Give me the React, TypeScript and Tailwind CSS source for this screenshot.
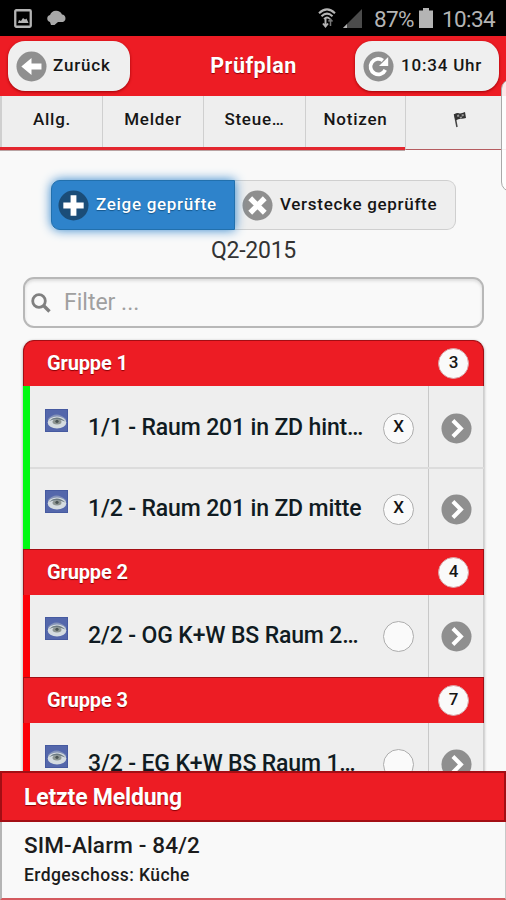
import type { ReactNode } from "react";

const EMBOSS = "[text-shadow:0_1px_0_#f3f3f3]";
const SHADE = "[text-shadow:0_1px_1px_#8a0006]";

function Disc({ color, children }: { color: string; children: ReactNode }) {
  return (
    <svg viewBox="0 0 32 32" className="block size-[31px] shrink-0">
      <circle cx="16" cy="16" r="15.5" fill={color} />
      {children}
    </svg>
  );
}

function ArrowLeft() {
  return (
    <Disc color="#8f8f8f">
      <path d="M5.5 16 16 7.3v5.500h10.300v6.400H16v5.500Z" fill="#fff" />
    </Disc>
  );
}

function Refresh() {
  return (
    <Disc color="#8f8f8f">
      <path d="M23 19.500A8 8 0 1 1 20.500 9.700" fill="none" stroke="#fff" strokeWidth="3.800" />
      <path d="M26 6.200V15.500H16.500Z" fill="#fff" />
    </Disc>
  );
}

function Plus() {
  return (
    <Disc color="#1b4d78">
      <path d="M13 5.500h6V13h7.500v6H19v7.500h-6V19H5.500v-6H13Z" fill="#fff" />
    </Disc>
  );
}

function Cross() {
  return (
    <Disc color="#8f8f8f">
      <path d="m8.500 8.500 15 15M23.500 8.500 8.500 23.500" stroke="#fff" strokeWidth="5.600" />
    </Disc>
  );
}

function Chevron() {
  return (
    <Disc color="#8f8f8f">
      <path d="m12.300 7.800 8.200 8.200-8.200 8.200" fill="none" stroke="#fff" strokeWidth="4.200" />
    </Disc>
  );
}

function Eye() {
  return (
    <svg viewBox="0 0 23 23" className="block size-[23px] shrink-0">
      <rect width="23" height="23" fill="#465aa0" />
      <rect x="1" y="1" width="21" height="21" fill="#5467ab" />
      <path d="M3 10Q11 1 21 10L20 14H4Z" fill="#8493b9" />
      <ellipse cx="12" cy="13.500" rx="9.300" ry="6" fill="#d5dce0" />
      <path d="M4 12Q12 5 20.500 12.500Q12 9 4 12Z" fill="#6d7b83" />
      <ellipse cx="12" cy="12.800" rx="4.500" ry="2.600" fill="#8d9591" />
      <circle cx="12" cy="12.300" r="1.600" fill="#4b5555" />
    </svg>
  );
}

function StatusBar() {
  return (
    <div className="flex h-9 shrink-0 items-center bg-black pl-[14px] pr-[11px] text-[#b4b4b4]">
      <svg viewBox="0 0 18 19" className="h-[19px] w-[18px]">
        <rect x="1.250" y="1.250" width="15.500" height="16.500" rx="1" fill="none" stroke="#b4b4b4" strokeWidth="2.300" />
        <path d="m4 14 1-3 2 1 2-3 2 1.500 1.500-1 2 4.500Z" fill="#b4b4b4" />
      </svg>
      <svg viewBox="0 0 19 16" className="ml-[15px] h-4 w-[19px]">
        <path d="M3 12A3.600 3.600 0 0 1 3 5 6.500 6.500 0 0 1 15 4.500 3.900 3.900 0 0 1 16 12H11L7.500 15H4Z" fill="#a8a8a8" />
      </svg>
      <svg viewBox="0 0 18 20" className="ml-[252px] h-5 w-[18px]" fill="none" stroke="#b4b4b4">
        <path d="M1 5.200Q9-2.500 17 5.200M3.500 8.200Q9 3 14.500 8.200" strokeWidth="2" />
        <path d="M6 11Q9 8 12 11" strokeWidth="1.700" />
        <path d="M7.500 10v8M5 15.500l2.500 3 2.500-3" strokeWidth="1.900" />
        <path d="M12.500 18v-6M10.500 13.500l2-2.300 2 2.300" stroke="#777" strokeWidth="1.500" />
      </svg>
      <svg viewBox="0 0 19 19" className="ml-[7px] h-[19px] w-[19px]">
        <path d="M0 19 19 0v19Z" fill="#4b4b4b" />
        <path d="m0 19 4-4v4Z" fill="#b4b4b4" />
      </svg>
      <span className="ml-[12px] w-[42px] whitespace-nowrap pt-[3px] text-[22.500px] tracking-[-0.700px]">87%</span>
      <svg viewBox="0 0 14 20" className="ml-[3px] h-5 w-[14px]">
        <path d="M0 2.500h4V0h6v2.500h4V20H0Z" fill="#b4b4b4" />
      </svg>
      <span className="ml-[9px] whitespace-nowrap pt-[3px] text-[22.500px] tracking-[-0.600px]">10:34</span>
    </div>
  );
}

function Header() {
  const button =
    "flex h-[50px] items-center rounded-[17px] bg-[#efefef] text-[17px] font-medium tracking-[0.800px] text-[#161616] shadow-[0_1px_3px_#9c0006] " + EMBOSS;
  return (
    <header className="flex h-[60px] shrink-0 items-center justify-between bg-[#ed1c24] pl-2 pr-[7px]">
      <button className={button + " w-[122px] pl-2"}>
        <ArrowLeft />
        <span className="ml-[6px] -mt-px">Zurück</span>
      </button>
      <h1 className={"ml-[22px] pt-px text-[21.500px] font-bold tracking-[0.450px] text-white " + SHADE}>Prüfplan</h1>
      <button className={button + " w-[144px] pl-2"}>
        <Refresh />
        <span className="ml-[7px] -mt-px whitespace-nowrap">10:34 Uhr</span>
      </button>
    </header>
  );
}

function Flag() {
  return (
    <svg viewBox="0 0 14 17" className="ml-[7px] h-[17px] w-[14px]">
      <path d="M1.500 3 4 16" stroke="#444" strokeWidth="1.500" />
      <path d="M1 3.500Q4 1.500 6 2.200T12 1L13 7Q10 8 8 7.800T2.500 9.500Z" fill="#333" />
      <path d="m4 4 2-.5.4 2-2 .5ZM8.500 3.500l2-.4.4 2-2 .4ZM6.700 6l2-.4.3 1.500-2 .4Z" fill="#999" />
    </svg>
  );
}

function Tabs() {
  const tab = "flex h-full items-center justify-center border-l border-[#cfcfcf] pb-[3px] " + EMBOSS;
  return (
    <nav className="flex h-[54px] shrink-0 text-[17px] font-medium tracking-[0.750px] text-[#161616]">
      <div className="flex w-[405px] border-b-[3px] border-[#e3262e] bg-[#eee] shadow-[0_1px_0_#b9a3a3]">
        <div className={tab + " w-[102px] border-l-2"}>Allg.</div>
        <div className={tab + " w-[101px]"}>Melder</div>
        <div className={tab + " w-[102px]"}>Steue…</div>
        <div className={tab + " w-[100px]"}>Notizen</div>
      </div>
      <div className="flex flex-1 items-center justify-center border-b border-l border-b-[#b55c60] border-l-[#cfcfcf] bg-[#eee] pb-[6px]">
        <Flag />
      </div>
    </nav>
  );
}

function GroupHeader({ name, count, first }: { name: string; count: number; first?: boolean }) {
  return (
    <div
      className={
        "flex h-[46px] shrink-0 items-center justify-between border border-b-0 border-[#a30e14] bg-[#ed1c24] pl-[23px] pr-[14px] text-white " +
        (first ? "rounded-t-[11px]" : "")
      }
    >
      <span className={"pb-[2px] text-[20px] font-bold tracking-[-0.150px] " + SHADE}>{name}</span>
      <span className="flex size-[31px] items-center justify-center rounded-full border border-[#d9a0a3] bg-[#fafafa] pb-[2px] text-[17px] font-medium text-[#161616]">
        {count}
      </span>
    </div>
  );
}

function Row({ label, done, divided }: { label: string; done?: boolean; divided?: boolean }) {
  return (
    <div className={"flex shrink-0 border-l-[7px] " + (done ? "border-l-[#00f911] " : "border-l-[#fb0007] ") + (divided ? "h-[83px]" : done ? "h-[80px]" : "h-[82px]")}>
      <div className={"flex flex-1 bg-[#eee] " + (divided ? "border-b-2 border-[#dcdcdc]" : "")}>
        <div className={"flex w-[399px] items-center border-r border-[#c8c8c8] " + (divided ? "pt-[3px]" : "")}>
          <div className="mb-[16px] ml-[15px]">
            <Eye />
          </div>
          <span className={"ml-[20px] w-[295px] whitespace-nowrap text-[23px] font-medium tracking-[-0.150px] text-[#101b22] " + EMBOSS}>{label}</span>
          <span className="flex size-[31px] shrink-0 items-center justify-center rounded-full border border-[#adadad] bg-[#fafafa] pb-[3px] text-[17px] font-medium text-[#161616]">
            {done ? "X" : ""}
          </span>
        </div>
        <div className={"flex flex-1 items-center justify-center border-r border-[#cfcfcf] " + (divided ? "pt-[3px]" : "")}>
          <Chevron />
        </div>
      </div>
    </div>
  );
}

export default function App() {
  return (
    <div className="relative flex h-[900px] w-[506px] flex-col overflow-hidden bg-[#f9f9f9] font-[Roboto,sans-serif]">
      <StatusBar />
      <Header />
      <Tabs />
      <main className="flex h-[621px] shrink-0 flex-col overflow-hidden pl-[23px] pr-[22px] pt-[30px]">
        <div className="ml-7 flex h-[50px] w-[405px] shrink-0 text-[17px] font-medium tracking-[0.700px]">
          <button className="z-10 flex w-[184px] items-center rounded-l-[9px] border border-[#2270ad] bg-[#2e83cb] pl-[6px] text-white shadow-[0_0_11px_#2e83cb] [text-shadow:0_1px_1px_#15568b]">
            <Plus />
            <span className="ml-[7px] whitespace-nowrap pb-px">Zeige geprüfte</span>
          </button>
          <button className={"flex flex-1 items-center rounded-r-[9px] border border-l-0 border-[#cfcfcf] bg-[#eee] pl-[7px] text-[#161616] " + EMBOSS}>
            <Cross />
            <span className="ml-[7px] whitespace-nowrap pb-px">Verstecke geprüfte</span>
          </button>
        </div>
        <p className="h-[47px] shrink-0 pt-[5px] text-center text-[23px] leading-[32px] tracking-[-0.250px] text-[#333]">Q2-2015</p>
        <div className="flex h-[51px] shrink-0 items-center rounded-[11px] border-2 border-[#b8b8b8] bg-[#f9f9f9] pl-[6px] shadow-[inset_0_2px_3px_#dcdcdc]">
          <svg viewBox="0 0 20 20" className="size-5" fill="none" stroke="#808080">
            <circle cx="8" cy="8" r="6.300" strokeWidth="2.800" />
            <path d="m12.500 12.500 6 6" strokeWidth="3.400" />
          </svg>
          <span className="ml-[13px] pt-px text-[23px] text-[#a0a0a0]">Filter ...</span>
        </div>
        <div className="mt-[12px] flex shrink-0 flex-col rounded-t-[11px] shadow-[0_1px_3px_#999]">
          <GroupHeader name="Gruppe 1" count={3} first />
          <Row label="1/1 - Raum 201 in ZD hint…" done divided />
          <Row label="1/2 - Raum 201 in ZD mitte" done />
          <GroupHeader name="Gruppe 2" count={4} />
          <Row label="2/2 - OG K+W BS Raum 2…" />
          <GroupHeader name="Gruppe 3" count={7} />
          <Row label="3/2 - EG K+W BS Raum 1…" />
        </div>
      </main>
      <footer className="flex h-[129px] shrink-0 flex-col">
        <div className={"flex h-[51px] items-center border-2 border-[#a30e14] bg-[#ed1c24] pl-[22px] pt-[3px] text-[23px] font-bold tracking-[-0.200px] text-white " + SHADE}>
          Letzte Meldung
        </div>
        <div className="flex flex-1 flex-col border-b-2 border-l-2 border-r border-b-[#d45a5f] border-l-[#b5b5b5] border-r-[#c8c8c8] bg-[#f9f9f9] pl-[22px] pt-[8px] font-medium text-[#1c1c1c]">
          <span className="text-[22.500px] leading-[30px] tracking-[0.150px]">SIM-Alarm - 84/2</span>
          <span className="mt-[2px] text-[17.500px] leading-[26px] tracking-[0.400px]">Erdgeschoss: Küche</span>
        </div>
      </footer>
      <div className="absolute left-[501px] top-[79px] h-[113px] w-[20px] rounded-[11px] border border-[#a9a9a9] bg-white/90" />
    </div>
  );
}
